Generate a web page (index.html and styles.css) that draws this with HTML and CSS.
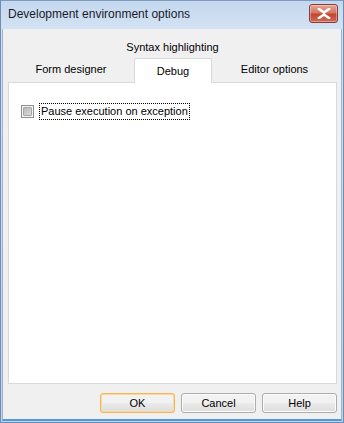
FILE: index.html
```html
<!DOCTYPE html>
<html lang="en">
<head>
  <meta charset="UTF-8">
  <title>Development environment options</title>
  <link rel="stylesheet" href="styles.css">
</head>
<body>
  <div class="window">
    <div class="titlebar">
      <span class="title">Development environment options</span>
      <button class="close-btn" aria-label="Close">
        <svg width="14" height="11" viewBox="0 0 14 11">
          <path d="M2 1 L7 4.5 L12 1 M2 10 L7 6.5 L12 10" fill="none" stroke="#fff" stroke-width="2.6" stroke-linecap="square"/>
        </svg>
      </button>
    </div>
    <div class="client">
      <div class="tabs">
        <div class="tab-row">
          <div class="tab">Syntax highlighting</div>
        </div>
        <div class="tab-row">
          <div class="tab tab-form">Form designer</div>
          <div class="tab tab-debug active">Debug</div>
          <div class="tab tab-editor">Editor options</div>
        </div>
      </div>
      <div class="panel">
        <label class="check">
          <span class="box"><span class="box-inner"></span></span>
          <span class="check-label">Pause execution on exception</span>
        </label>
      </div>
      <div class="buttons">
        <button class="btn default">OK</button>
        <button class="btn">Cancel</button>
        <button class="btn">Help</button>
      </div>
    </div>
  </div>
</body>
</html>
```
FILE: styles.css
```css
* { margin: 0; padding: 0; box-sizing: border-box; }
body {
  width: 344px;
  height: 423px;
  font-family: 'Liberation Sans', Arial, sans-serif;
  font-size: 11px;
  color: #000;
  background: #fff;
}
/* Window frame */
.window {
  width: 344px;
  height: 423px;
  display: flex;
  flex-direction: column;
  background: linear-gradient(#c4d8ee, #d4e3f4 30px, #bcd3ec);
  border: 1px solid #6d8db2;
  border-top-color: #7f9cc0;
}
.titlebar {
  height: 28px;
  display: flex;
  align-items: center;
  justify-content: space-between;
  padding: 0 5px 0 7px;
}
.title {
  color: #1b1b2b;
  font-size: 12px;
  margin-top: -2px;
}
.close-btn {
  width: 29px;
  height: 19px;
  margin-top: -3px;
  border: 1px solid #8a3a3a;
  border-radius: 3px;
  background: linear-gradient(#e8a593, #d27865 45%, #c2452f 55%, #cf6b55);
  display: flex;
  align-items: center;
  justify-content: center;
  box-shadow: inset 0 0 0 1px rgba(255,255,255,0.35);
}
/* Client area */
.client {
  flex: 1;
  margin: 0 1px 1px 1px;
  background: #f0f0f0;
  border: 1px solid #9ab4d2;
  border-top: none;
  border-bottom: 2px solid #4f9ad8;
  display: flex;
  flex-direction: column;
  padding: 0 4px 0 5px;
}
.tabs {
  padding-top: 7px;
}
.tab-row {
  display: flex;
  height: 22px;
  align-items: center;
}
.tab {
  flex: 1;
  text-align: center;
}
.tab-form { flex: 0 0 126px; }
.tab-debug { flex: 0 0 78px; }
.tab-editor { flex: 1; }
.tab-row + .tab-row {
  height: 24px;
  padding-bottom: 2px;
}
.tab.active {
  align-self: stretch;
  display: flex;
  align-items: center;
  justify-content: center;
  background: #fff;
  border: 1px solid #d9d9d9;
  border-bottom: none;
  border-radius: 2px 2px 0 0;
  margin-bottom: -3px;
  position: relative;
  z-index: 1;
}
/* Tab page */
.panel {
  flex: 1;
  background: #fff;
  border: 1px solid #d9d9d9;
  padding: 21px 12px;
}
.check {
  display: flex;
  align-items: center;
  gap: 6px;
}
.box {
  width: 13px;
  height: 13px;
  border: 1px solid #8e8f8f;
  background: #f4f4f4;
  display: flex;
  align-items: center;
  justify-content: center;
}
.box-inner {
  width: 9px;
  height: 9px;
  border: 1px solid #a7a7a7;
  border-radius: 1px;
  background: linear-gradient(135deg, #b9b9b9, #dcdcdc);
}
.check-label {
  outline: 1px dotted #000;
  outline-offset: 0;
  padding: 0 1px;
  line-height: 15px;
}
/* Dialog buttons */
.buttons {
  display: flex;
  justify-content: flex-end;
  gap: 6px;
  padding: 9px 0 6px;
}
.btn {
  width: 75px;
  height: 20px;
  font-family: inherit;
  font-size: 11px;
  color: #000;
  border: 1px solid #acacac;
  border-radius: 3px;
  background: linear-gradient(#f2f2f2 50%, #ebebeb 50%, #dddddd);
  box-shadow: inset 0 0 0 1px #fcfcfc;
}
.btn.default {
  border-color: #f5b553;
  box-shadow: inset 0 0 0 1px #fbd9a0;
}
```
